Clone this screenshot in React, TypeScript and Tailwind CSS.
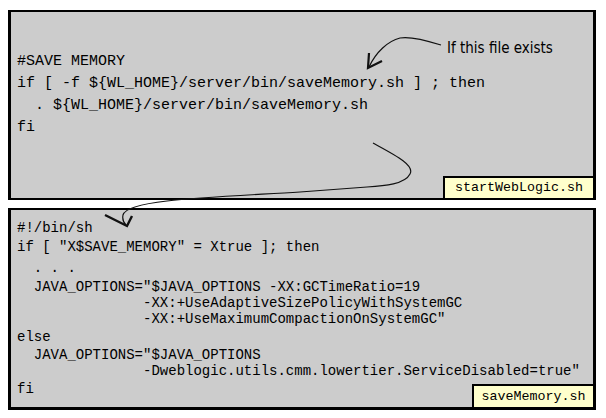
import React from "react";

const mono = { fontFamily: '"Liberation Mono", "Courier New", monospace' };

export default function App() {
  const top = [
    "#SAVE MEMORY",
    "if [ -f ${WL_HOME}/server/bin/saveMemory.sh ] ; then",
    "  . ${WL_HOME}/server/bin/saveMemory.sh",
    "fi",
  ];
  const bottom: [string, string][] = [
    ["#!/bin/sh", "h-[19px]"],
    ['if [ "X$SAVE_MEMORY" = Xtrue ]; then', "h-[21px]"],
    ["  . . .", "h-[19px]"],
    ['  JAVA_OPTIONS="$JAVA_OPTIONS -XX:GCTimeRatio=19', "h-[16px]"],
    ["               -XX:+UseAdaptiveSizePolicyWithSystemGC", "h-[16px]"],
    ['               -XX:+UseMaximumCompactionOnSystemGC"', "h-[18px]"],
    ["else", "h-[18px]"],
    ['  JAVA_OPTIONS="$JAVA_OPTIONS', "h-[16px]"],
    ['               -Dweblogic.utils.cmm.lowertier.ServiceDisabled=true"', "h-[18px]"],
    ["fi", "h-[16px]"],
  ];
  return (
    <div className="relative w-[606px] h-[418px] bg-white overflow-hidden">
      <div className="flex flex-col pt-[10px] pl-[8px] gap-[8px]">
        <div
          className="relative w-[588px] h-[190px] bg-[#cccccc] border-black border-[3px] border-t-2 border-b-2 pt-[39px] pl-[6px] text-black text-[15px] leading-[22px]"
          style={mono}
        >
          {top.map((l, i) => (
            <div key={i} className="whitespace-pre h-[22px]">
              {l}
            </div>
          ))}
          <div className="absolute right-0 bottom-0 w-[150px] h-[22px] bg-[#ffffcc] border-l-2 border-t-2 border-black flex items-center justify-center text-[13.33px] leading-none">
            startWebLogic.sh
          </div>
        </div>
        <div
          className="relative w-[588px] h-[202px] bg-[#cccccc] border-black border-[3px] border-t-2 border-b-[3px] pt-[11px] pl-[6px] text-black text-[14px] leading-[14px]"
          style={mono}
        >
          {bottom.map(([l, h], i) => (
            <div key={i} className={`whitespace-pre ${h}`}>
              {l}
            </div>
          ))}
          <div className="absolute right-0 bottom-0 w-[121px] h-[23px] bg-[#ffffcc] border-l-2 border-t-2 border-black flex items-center justify-center text-[13.33px] leading-none">
            saveMemory.sh
          </div>
        </div>
      </div>
      <div
        className="absolute left-[447px] top-[38px] text-[15px] leading-[20px] text-black"
        style={{ fontFamily: '"Liberation Sans Narrow", "DejaVu Sans Condensed", "Liberation Sans", sans-serif' }}
      >
        If this file exists
      </div>
      <svg className="absolute left-0 top-0 pointer-events-none" width="606" height="418" viewBox="0 0 606 418">
        <path d="M441,45 C425,40 410,36 400,38 C388,41 376,52 369,67" fill="none" stroke="#111" strokeWidth="1.2" />
        <path d="M369,53 L368,68 L382,61" fill="none" stroke="#111" strokeWidth="2.2" strokeLinejoin="miter" />
        <path
          d="M373,143 C395,155 415,165 410,174 C405,184 385,186 367,187 L300,192 C250,195 200,197 167,201 C140,204 125,208 123,215 C122,220 124,223 126,225"
          fill="none"
          stroke="#111"
          strokeWidth="1.2"
        />
        <path d="M105,215 L127,226 L132,216" fill="none" stroke="#111" strokeWidth="2.4" />
      </svg>
    </div>
  );
}
